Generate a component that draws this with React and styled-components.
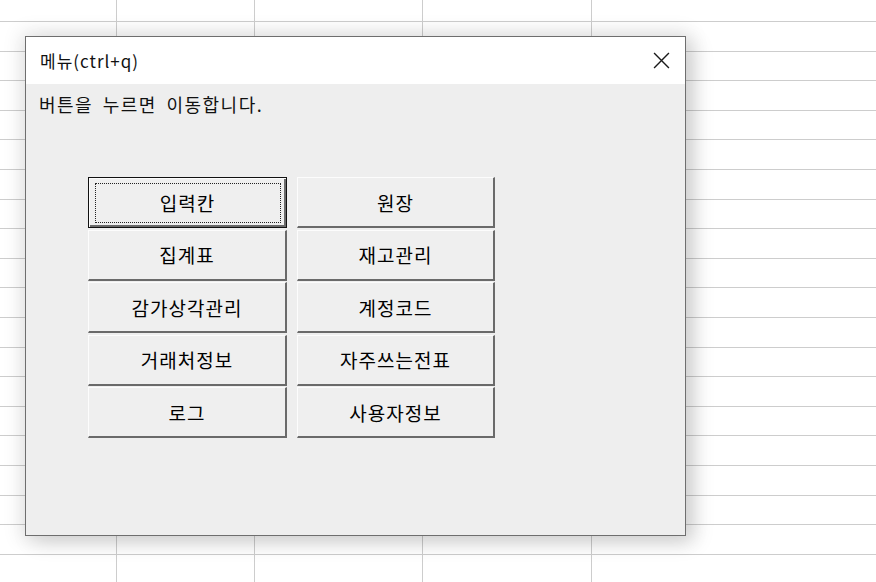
import React from 'react';
import styled, { createGlobalStyle } from 'styled-components';

const Global = createGlobalStyle`
  html, body { margin: 0; padding: 0; background: #fff; }
  body {
    width: 876px; height: 582px; overflow: hidden;
    font-family: "Noto Sans CJK KR", "Noto Sans", sans-serif;
  }
`;

const LINE = '#cdcdcd';

const Sheet = styled.div`
  position: relative;
  width: 876px;
  height: 582px;
  overflow: hidden;
  background: #fff;
  display: grid;
  grid-template-columns: 117px 138px 168px 169px 1fr;
  grid-template-rows: ${(p) => p.$rows};
`;

const Cell = styled.div`
  box-sizing: border-box;
  border-bottom: 1px solid ${LINE};
  border-right: ${(p) => (p.$last ? 'none' : `1px solid ${LINE}`)};
`;

const Dialog = styled.div`
  position: absolute;
  left: 25px;
  top: 36px;
  width: 661px;
  height: 500px;
  box-sizing: border-box;
  border: 1px solid #6e6e6e;
  background: #eeeeee;
  display: flex;
  flex-direction: column;
  box-shadow: 0 0 18px 5px rgba(0, 0, 0, 0.09), 8px 6px 20px rgba(0, 0, 0, 0.14);
`;

const TitleBar = styled.div`
  height: 47px;
  flex: none;
  background: #fff;
  display: flex;
  align-items: center;
  justify-content: space-between;
  padding: 0 15px 0 14px;
`;

const Title = styled.span`
  font-size: 17px;
  color: #111;
  letter-spacing: 1px;
`;

const CloseIcon = styled.svg`
  width: 17px;
  height: 17px;
  display: block;
`;

const Body = styled.div`
  flex: 1;
  padding: 7px 13px 0 13px;
`;

const Message = styled.p`
  margin: 0;
  font-size: 18px;
  line-height: 26px;
  color: #111;
  word-spacing: 4px;
  letter-spacing: 1.5px;
`;

const ButtonGrid = styled.div`
  margin: 60px 0 0 49px;
  display: grid;
  grid-template-columns: 199px 198px;
  column-gap: 10px;
  row-gap: 1.5px;
  grid-auto-rows: 51px;
  width: max-content;
`;

const Btn = styled.button`
  position: relative;
  box-sizing: border-box;
  margin: 0;
  padding: 0;
  background: #efefef;
  font-family: "Noto Sans CJK KR", "Noto Sans", sans-serif;
  font-size: 19px;
  letter-spacing: 1px;
  color: #000;
  border-style: solid;
  border-width: ${(p) => (p.$focused ? '1px' : '1px 2px 2px 1px')};
  border-color: ${(p) =>
    p.$focused ? '#111' : '#fcfcfc #6a6a6a #6a6a6a #fcfcfc'};
  box-shadow: ${(p) =>
    p.$focused ? 'inset 1px 1px #fcfcfc, inset -2px -2px #6a6a6a' : 'none'};
  cursor: default;

  &::after {
    content: '';
    display: ${(p) => (p.$focused ? 'block' : 'none')};
    position: absolute;
    inset: 5px 5px 4px 6px;
    border: 1px dotted #222;
  }
`;

const lines = [];
for (let i = 0; i < 20; i++) lines.push(Math.round(21 + i * 29.6));
const heights = lines.map((l, i) => (i === 0 ? l + 1 : l - lines[i - 1]));
const rows = heights.map((h) => `${h}px`).join(' ') + ' 1fr';

const buttons = [
  ['입력칸', '원장'],
  ['집계표', '재고관리'],
  ['감가상각관리', '계정코드'],
  ['거래처정보', '자주쓰는전표'],
  ['로그', '사용자정보'],
];

export default function App() {
  const cells = [];
  for (let r = 0; r < heights.length + 1; r++) {
    for (let c = 0; c < 5; c++) {
      cells.push(<Cell key={`${r}-${c}`} $last={c === 4} />);
    }
  }
  return (
    <>
      <Global />
      <Sheet $rows={rows}>
        {cells}
        <Dialog>
          <TitleBar>
            <Title>메뉴(ctrl+q)</Title>
            <CloseIcon viewBox="0 0 16 16">
              <path d="M1 1 L15 15 M15 1 L1 15" stroke="#1a1a1a" strokeWidth="1.3" fill="none" />
            </CloseIcon>
          </TitleBar>
          <Body>
            <Message>버튼을 누르면 이동합니다.</Message>
            <ButtonGrid>
              {buttons.flat().map((label, i) => (
                <Btn key={label} $focused={i === 0}>{label}</Btn>
              ))}
            </ButtonGrid>
          </Body>
        </Dialog>
      </Sheet>
    </>
  );
}
